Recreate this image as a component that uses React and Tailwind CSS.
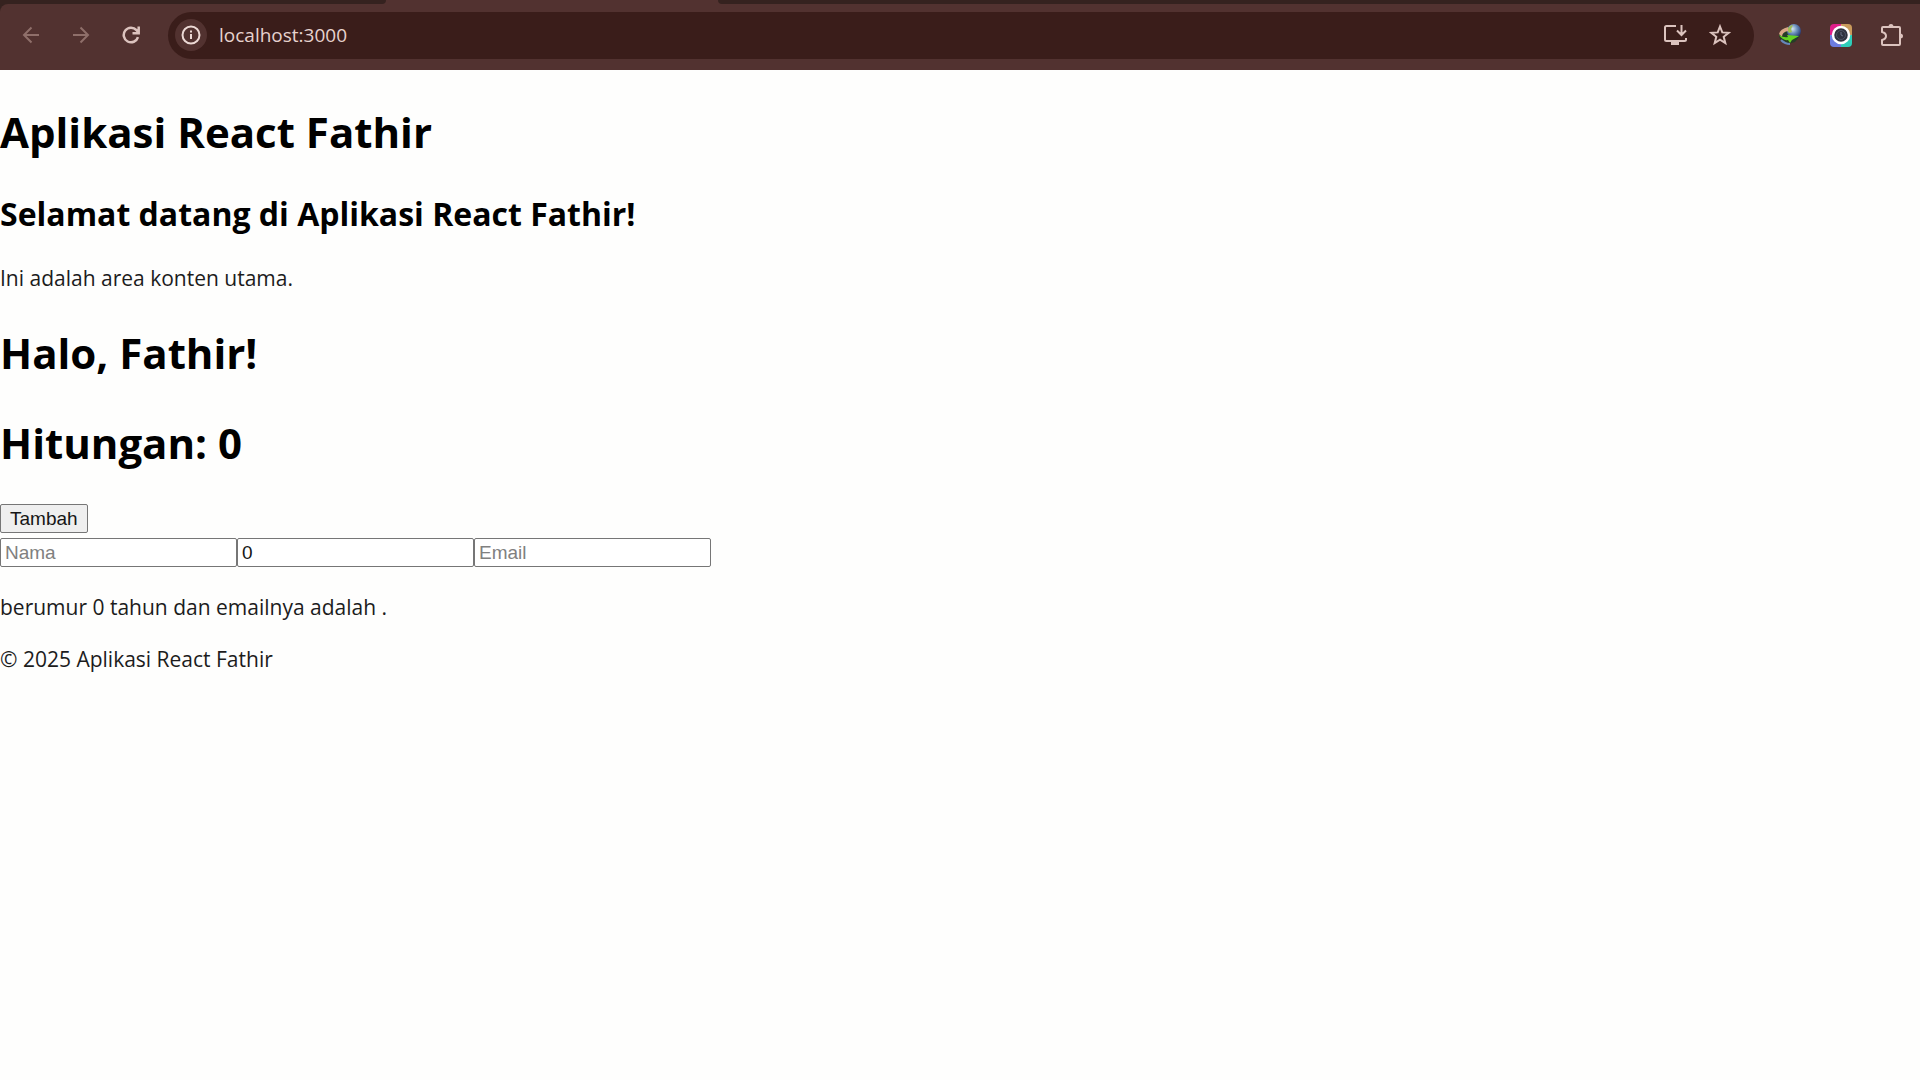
import { useState } from "react";

const iconButton = "flex size-8 shrink-0 items-center justify-center";

function TabStrip() {
  return (
    <div className="flex h-1 bg-[#523230]">
      <div className="w-[386px] shrink-0 rounded-br-full bg-[#35221f]" />
      <div className="w-[332px] shrink-0" />
      <div className="flex-1 rounded-bl-full bg-[#35221f]" />
    </div>
  );
}

function Toolbar({ address, onAddress }) {
  return (
    <div className="bg-[#35221f]">
      <div className="flex h-[66px] items-center rounded-tl-lg bg-[#523230] pb-1 text-[#dcc3be]">
        <nav className="flex gap-[18px] pl-[15px]" aria-label="Navigasi">
          <button type="button" aria-label="Kembali" className={iconButton + " text-[#8f6f6a]"}>
            <svg width="18" height="18" viewBox="0 0 18 18" fill="none" stroke="currentColor" strokeWidth="2">
              <path d="M17 9H2M9.500 1.500 2 9l7.500 7.500" />
            </svg>
          </button>
          <button type="button" aria-label="Maju" className={iconButton + " text-[#8f6f6a]"}>
            <svg width="18" height="18" viewBox="0 0 18 18" fill="none" stroke="currentColor" strokeWidth="2">
              <path d="M1 9h15M8.500 1.500 16 9l-7.500 7.500" />
            </svg>
          </button>
          <button type="button" aria-label="Muat ulang" className={iconButton}>
            <svg width="20" height="18" viewBox="0 0 20 18" fill="none" stroke="currentColor" strokeWidth="2.500">
              <path d="M17 11.200A7.300 7.300 0 1 1 15.500 4.200L17 6M17.700 .5v6.700H11.500" />
            </svg>
          </button>
        </nav>
        <div className="ml-[21px] flex h-[47px] min-w-0 flex-1 items-center rounded-full bg-[#3a1d1a] pr-[18px] pl-[7px]">
          <button type="button" aria-label="Informasi situs" className="flex size-8 shrink-0 items-center justify-center rounded-full bg-[#523230] text-[#ecd9d5]">
            <svg width="20" height="20" viewBox="0 0 20 20" fill="none" stroke="currentColor" strokeWidth="2">
              <circle cx="10" cy="10" r="8.500" />
              <path d="M10 9v5M10 5.500v2" />
            </svg>
          </button>
          <input
            aria-label="Alamat"
            value={address}
            onChange={(e) => onAddress(e.target.value)}
            className="ml-3 min-w-0 flex-1 bg-transparent text-[19px] leading-7 text-[#e6d2ce] outline-none"
          />
          <div className="flex gap-[13px]">
            <button type="button" aria-label="Pasang aplikasi" className={iconButton}>
              <svg width="24" height="22" viewBox="0 0 24 22" fill="none" stroke="currentColor" strokeWidth="2">
                <path d="M13 2H3.500Q2 2 2 3.500v12Q2 17 3.500 17h18q1.500 0 1.500-1.500V14M18.500 1v9M14 6.500l4.500 4.500L23 6.500" />
                <path d="M8 17h8v4H8z" fill="currentColor" stroke="none" />
              </svg>
            </button>
            <button type="button" aria-label="Tandai halaman" className={iconButton}>
              <svg width="22" height="22" viewBox="0 0 22 22" fill="none" stroke="currentColor" strokeWidth="2">
                <path d="m11 2.500 2.300 5.900 6.300.4-4.900 4 1.600 6.200L11 15.600 5.700 19l1.600-6.200-4.900-4 6.300-.4z" />
              </svg>
            </button>
          </div>
        </div>
        <div className="ml-5 flex gap-[19px] pr-3">
          <button type="button" aria-label="Pengelola unduhan" className={iconButton}>
            <svg width="26" height="24" viewBox="0 0 26 24">
              <defs>
                <radialGradient id="globe" cx="0.400" cy="0.350" r="0.700">
                  <stop offset="0" stopColor="#d5e6ef" />
                  <stop offset="0.450" stopColor="#6d91bd" />
                  <stop offset="1" stopColor="#1c2e6d" />
                </radialGradient>
              </defs>
              <path d="M11 4Q3 6 2 12q0 6 9 9l7-2 5-6z" fill="#263d27" />
              <circle cx="17" cy="8" r="7" fill="url(#globe)" />
              <path d="M12 4q2-2 4-2l-2 4 1 3-3 1-2-3z" fill="#9fbd55" />
              <path d="M11 4Q3 6 2 11l3 3q0-5 6-6z" fill="#d9a586" />
              <path d="M2 12q5 3 9 2l-1-2 12 1-7 4-2 3-2-3q-5 1-9-5z" fill="#63d321" />
              <path d="M4 17q4 4 9 4" stroke="#6686b9" strokeWidth="2" fill="none" />
            </svg>
          </button>
          <button type="button" aria-label="Tangkapan layar" className={iconButton}>
            <svg width="24" height="24" viewBox="0 0 24 24">
              <defs>
                <clipPath id="tile"><rect x="1" y="1" width="22" height="23" rx="4" /></clipPath>
              </defs>
              <g clipPath="url(#tile)">
                <path d="M0 0h12v12H0z" fill="#e01e8a" />
                <path d="M12 0h12v12H12z" fill="#c99a5b" />
                <path d="M0 12h12v12H0z" fill="#6c7ce0" />
                <path d="M12 12h12v12H12z" fill="#2dcdb9" />
              </g>
              <circle cx="12" cy="12" r="8" fill="#30323f" stroke="#fff" strokeWidth="2.500" />
              <circle cx="12" cy="12" r="4.500" fill="none" stroke="#4c5364" />
              <path d="M12 9v3l2 1" fill="none" stroke="#697185" />
            </svg>
          </button>
          <button type="button" aria-label="Ekstensi" className={iconButton}>
            <svg width="24" height="24" viewBox="0 0 24 24" fill="none" stroke="currentColor" strokeWidth="2" strokeLinejoin="round">
              <path d="M3 4h16q1 0 1 1v16q0 1-1 1H3q-1 0-1-1v-4q4-1 4-4T2 9V5q0-1 1-1z" />
              <path d="M8.500 4a2.500 3 0 0 1 5 0zM20 10.500a3 2.500 0 0 1 0 5z" fill="currentColor" stroke="none" />
            </svg>
          </button>
        </div>
      </div>
    </div>
  );
}

const heading = "text-[42px] leading-[60px] font-bold text-black";

const field =
  "h-[29px] w-[237px] rounded-xs border border-[#767676] bg-white px-1 font-['Liberation_Sans',Arial,sans-serif] text-[19px] leading-6 text-[#161616] placeholder:text-[#808080]";

export default function App() {
  const [address, setAddress] = useState("localhost:3000");
  const [count, setCount] = useState(0);
  const [name, setName] = useState("");
  const [age, setAge] = useState("0");
  const [email, setEmail] = useState("");

  return (
    <div className="min-h-screen bg-[#fefefd] font-['Open_Sans','Noto_Sans',sans-serif] text-[21px] leading-7 text-[#1c1c1c]">
      <header>
        <TabStrip />
        <Toolbar address={address} onAddress={setAddress} />
      </header>
      <div className="pt-8">
        <h1 className={heading}>Aplikasi React Fathir</h1>
        <main>
          <h2 className="mt-[30px] text-[32px] leading-[44px] font-bold text-black">Selamat datang di Aplikasi React Fathir!</h2>
          <p className="mt-7">Ini adalah area konten utama.</p>
          <h1 className={"mt-[31px] " + heading}>Halo, Fathir!</h1>
          <h1 className={"mt-[30px] " + heading}>Hitungan: {count}</h1>
          <button
            type="button"
            onClick={() => setCount(count + 1)}
            className="mt-[31px] block h-[29px] rounded-xs border border-[#767676] bg-[#efefef] px-[9px] font-['Liberation_Sans',Arial,sans-serif] text-[19px] leading-6 text-[#161616]"
          >
            Tambah
          </button>
          <form className="mt-[5px] flex" onSubmit={(e) => e.preventDefault()}>
            <input aria-label="Nama" placeholder="Nama" value={name} onChange={(e) => setName(e.target.value)} className={field} />
            <input aria-label="Umur" inputMode="numeric" value={age} onChange={(e) => setAge(e.target.value)} className={field} />
            <input aria-label="Email" type="email" placeholder="Email" value={email} onChange={(e) => setEmail(e.target.value)} className={field} />
          </form>
          <p className="mt-[26px]">{name} berumur {age} tahun dan emailnya adalah {email}.</p>
        </main>
        <footer className="mt-6">© 2025 Aplikasi React Fathir</footer>
      </div>
    </div>
  );
}
